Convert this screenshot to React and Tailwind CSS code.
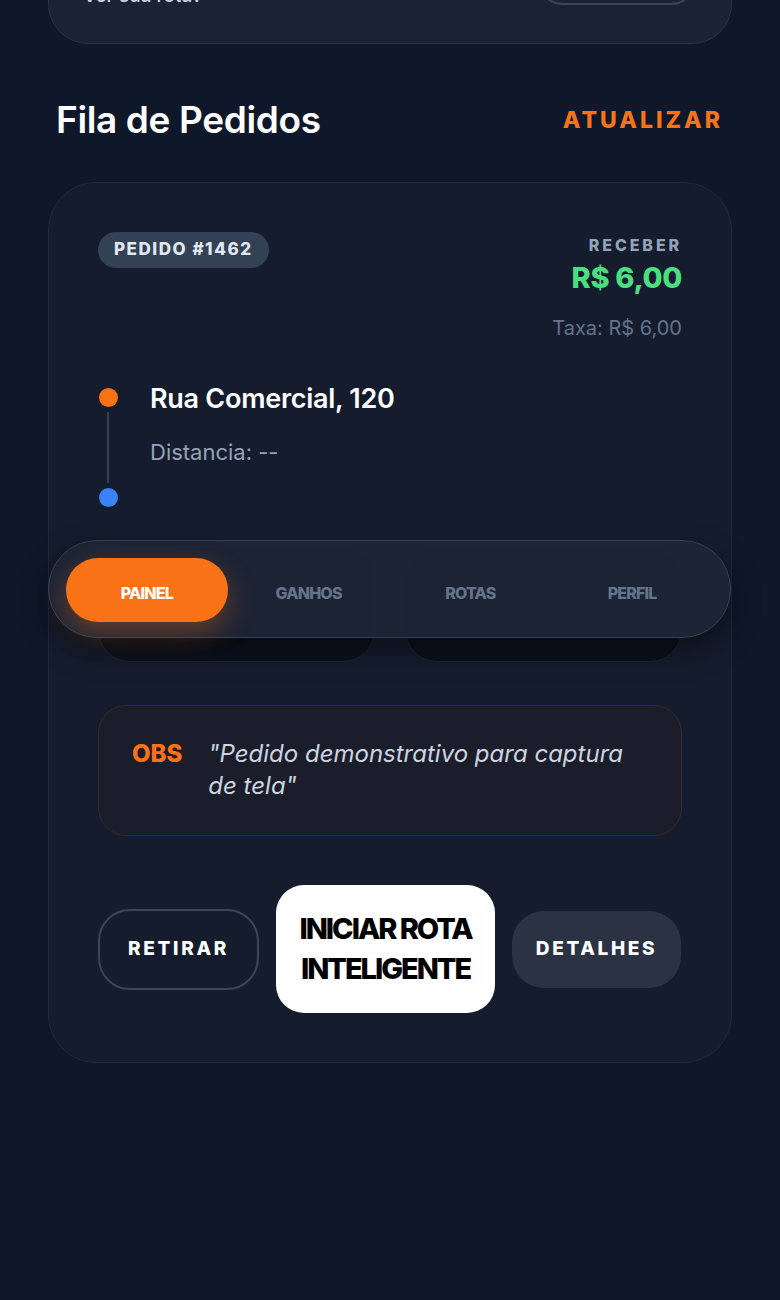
import { useState } from "react";

const tabs = ["PAINEL", "GANHOS", "ROTAS", "PERFIL"];

const BottomNav = () => {
  const [active, setActive] = useState("PAINEL");
  return (
    <div className="absolute left-[48px] top-[540px] w-[683px] h-[98px] rounded-full border border-[#334155] bg-[#1c2536]/95 shadow-[0_12px_30px_rgba(0,0,0,0.45)] px-[17px] flex items-center">
      {tabs.map((tab) => (
        <button
          key={tab}
          onClick={() => setActive(tab)}
          className={`flex-1 h-[64px] mt-[2px] pt-[6px] rounded-full text-[16px] font-extrabold tracking-[-0.05em] ${
            active === tab
              ? "bg-[#f97316] text-white shadow-[0_10px_28px_rgba(249,115,22,0.35)]"
              : "text-[#64748b]"
          }`}
        >
          {tab}
        </button>
      ))}
    </div>
  );
};

export default function App() {
  return (
    <div
      className="relative min-h-screen bg-[#0f172a] px-[48px] pb-[120px] overflow-hidden"
      style={{ fontFamily: "Inter, 'Noto Sans', sans-serif" }}
    >
      {/* Previous card, scrolled off the top */}
      <div className="mt-[-82px] rounded-[40px] border border-[#2a3447] bg-[#1a2234] px-[34px] pb-[38px] pt-[30px] flex items-end justify-between">
        <div className="mb-[-4px]">
          <p className="text-white text-[20px] font-bold">Sua rota</p>
          <p className="text-[#cbd5e1] text-[19px] leading-[26px] font-medium mt-1">Ver sua rota?</p>
        </div>
        <button className="w-[160px] h-[52px] rounded-full border-2 border-[#3b4659] text-white text-[14px] font-bold tracking-widest">
          ABRIR
        </button>
      </div>

      {/* Header */}
      <div className="mt-[56px] flex items-center justify-between pl-[8px] pr-[9px]">
        <h1 className="text-white text-[37px] leading-[40px] font-semibold tracking-[-0.01em]">Fila de Pedidos</h1>
        <button className="text-[#f97316] text-[23px] font-extrabold tracking-[0.13em]">ATUALIZAR</button>
      </div>

      {/* Order card */}
      <div className="mt-[42px] rounded-[48px] border border-[#1f2a3c] bg-[#151c2e] px-[49px] pt-[49px] pb-[49px]">
        <div className="flex items-start justify-between">
          <span className="h-[36px] px-[16px] rounded-full bg-[#334155] text-[#e2e8f0] text-[17px] font-extrabold tracking-[0.09em] flex items-center">
            PEDIDO #1462
          </span>
          <div className="text-right">
            <p className="text-[#94a3b8] text-[16px] font-extrabold tracking-[0.18em] mt-[3px] leading-[20px]">RECEBER</p>
            <p className="text-[#4ade80] text-[29px] font-extrabold leading-[34px] mt-[6px] tracking-[-0.01em]">R$ 6,00</p>
            <p className="text-[#64748b] text-[20px] leading-[26px] mt-[20px]">Taxa: R$ 6,00</p>
          </div>
        </div>

        {/* Route */}
        <div className="mt-[47px] flex gap-[32px]">
          <div className="flex flex-col items-center w-[20px]">
            <span className="w-[19px] h-[19px] rounded-full bg-[#f97316]" />
            <span className="w-[2px] h-[71px] bg-[#334155] my-[5px]" />
            <span className="w-[19px] h-[19px] rounded-full bg-[#3b82f6]" />
          </div>
          <div className="-mt-[6px]">
            <p className="text-white text-[27px] leading-[34px] font-semibold tracking-[-0.01em]">Rua Comercial, 120</p>
            <p className="text-[#94a3b8] text-[22px] leading-[30px] mt-[21px]">Distancia: --</p>
          </div>
        </div>

        {/* Stats (mostly hidden under nav) */}
        <div className="mt-[40px] grid grid-cols-2 gap-[30px]">
          <div className="h-[115px] rounded-[32px] border border-[#1c2536] bg-[#0c111d]" />
          <div className="h-[115px] rounded-[32px] border border-[#1c2536] bg-[#0c111d]" />
        </div>

        {/* Observation */}
        <div className="mt-[43px] h-[131px] rounded-[28px] border border-[#3a2a24] bg-[#1b1e2a] pl-[33px] pr-[50px] pt-[32px] flex gap-[26px]">
          <span className="text-[#f97316] text-[24px] leading-[32px] font-extrabold">OBS</span>
          <p className="text-[#cbd5e1] text-[24px] leading-[32px] italic">"Pedido demonstrativo para captura de tela"</p>
        </div>

        {/* Actions */}
        <div className="mt-[49px] flex items-center gap-[17px]">
          <button className="w-[161px] h-[81px] rounded-[32px] border-2 border-[#3b4659] text-white text-[19px] font-extrabold tracking-[0.14em]">
            RETIRAR
          </button>
          <button className="w-[219px] h-[128px] rounded-[28px] bg-white text-black text-[29px] leading-[40px] font-extrabold tracking-[-0.07em]">
            INICIAR ROTA
            <br />
            INTELIGENTE
          </button>
          <button className="w-[169px] h-[77px] rounded-[32px] bg-[#2a3244] text-white text-[19px] font-extrabold tracking-[0.14em]">
            DETALHES
          </button>
        </div>
      </div>

      <BottomNav />
    </div>
  );
}
